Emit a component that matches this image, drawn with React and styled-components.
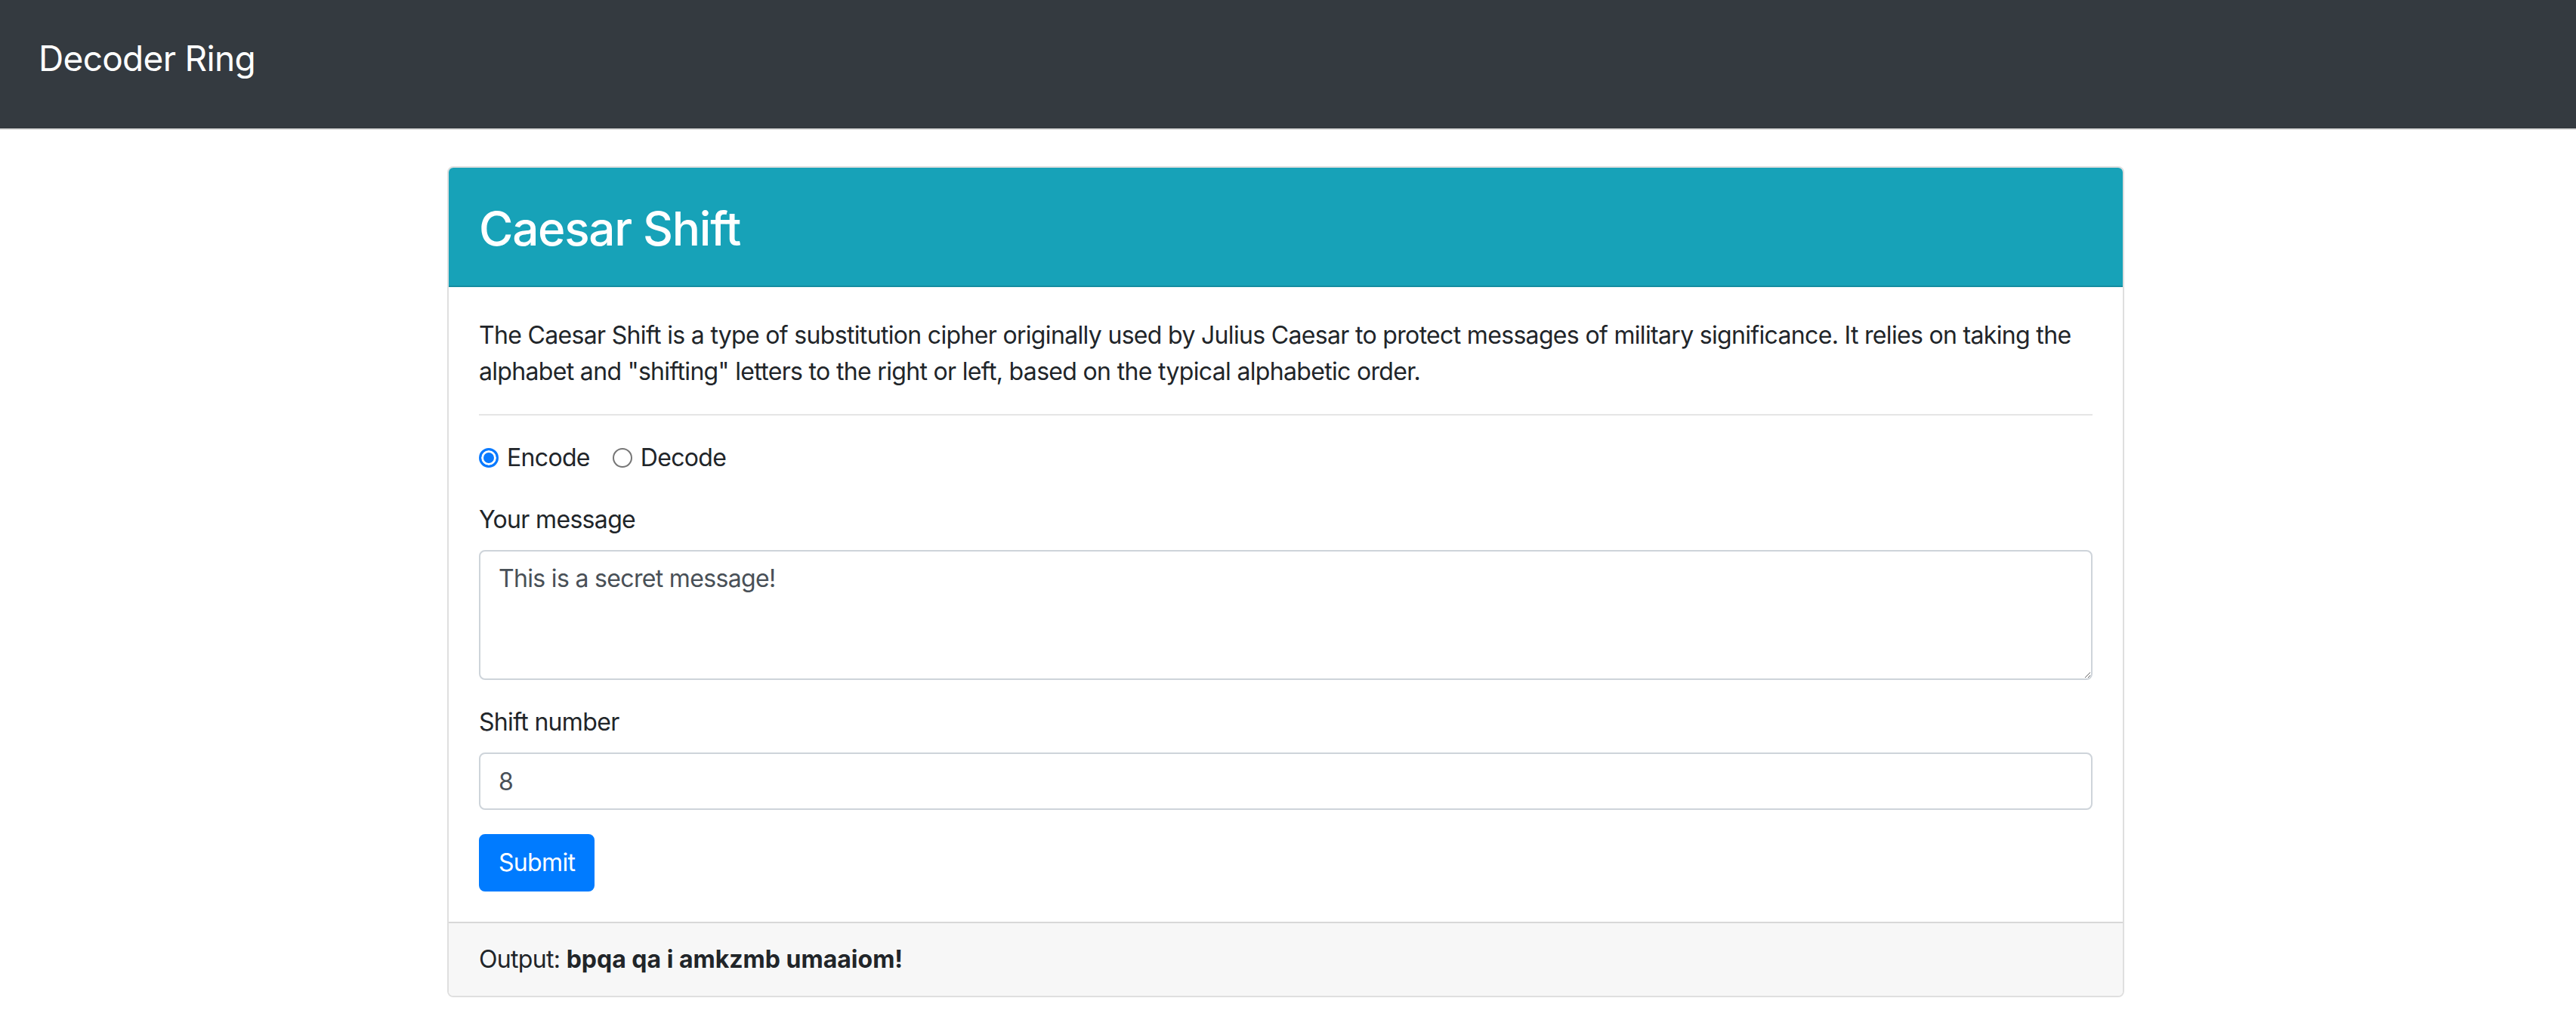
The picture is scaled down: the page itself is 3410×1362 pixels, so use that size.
import React from 'react';
import styled, { createGlobalStyle } from 'styled-components';

const GlobalStyle = createGlobalStyle`
  * {
    box-sizing: border-box;
  }

  body {
    margin: 0;
    background: #fff;
    color: #212529;
    font-family: Inter, "Noto Sans", "Liberation Sans", sans-serif;
    font-size: 32px;
    line-height: 48px;
    letter-spacing: -0.021em;
  }
`;

const Navbar = styled.nav`
  height: 172px;
  display: flex;
  align-items: center;
  padding: 0 51px 17px;
  background-color: #343a40;
  border-bottom: 2px solid #dcdcdc;
`;

const Brand = styled.a`
  color: #fff;
  font-size: 46px;
  line-height: 60px;
  letter-spacing: -0.015em;
  text-decoration: none;
`;

const Container = styled.main`
  width: 2226px;
  margin: 48px auto 0;
  padding-right: 6px;
`;

const Card = styled.section`
  border: 2px solid rgba(0, 0, 0, 0.125);
  border-radius: 8px;
  overflow: hidden;
`;

const CardHeader = styled.header`
  padding: 43px 40px 38px;
  background-color: #17a2b8;
  border-bottom: 2px solid rgba(0, 0, 0, 0.125);
`;

const Title = styled.h2`
  margin: 0;
  color: #fff;
  font-size: 62px;
  font-weight: 500;
  line-height: 75px;
  letter-spacing: -0.021em;
`;

const CardBody = styled.div`
  padding: 40px;
`;

const Description = styled.p`
  margin: 0 0 32px;
`;

const Divider = styled.hr`
  height: 0;
  margin: 0 0 32px;
  border: 0;
  border-top: 2px solid rgba(0, 0, 0, 0.1);
`;

const RadioRow = styled.div`
  display: flex;
  gap: 30px;
  margin-bottom: 34px;
`;

const RadioLabel = styled.label`
  display: flex;
  align-items: center;
  gap: 11px;
`;

const Radio = styled.input`
  appearance: none;
  width: 26px;
  height: 26px;
  margin: 0;
  border: 2px solid #767676;
  border-radius: 50%;
  background: #fff;

  &:checked {
    border: 3px solid #0a7aff;
    background: #0a7aff;
    box-shadow: inset 0 0 0 3px #fff;
  }
`;

const FormGroup = styled.div`
  margin-bottom: 32px;
`;

const FieldLabel = styled.label`
  display: block;
  margin-bottom: 16px;
`;

const fieldStyles = `
  display: block;
  width: 100%;
  padding: 12px 24px;
  border: 2px solid #ced4da;
  border-radius: 8px;
  background: #fff;
  color: #495057;
  font-family: inherit;
  font-size: 32px;
  line-height: 48px;
  letter-spacing: inherit;
`;

const TextArea = styled.textarea`
  ${fieldStyles}
  height: 172px;
  resize: vertical;
`;

const TextInput = styled.input`
  ${fieldStyles}
  height: 76px;
`;

const SubmitButton = styled.button`
  padding: 12px 24px;
  border: 2px solid #007bff;
  border-radius: 8px;
  background-color: #007bff;
  color: #fff;
  font-family: inherit;
  font-size: 32px;
  line-height: 48px;
  letter-spacing: inherit;
`;

const CardFooter = styled.footer`
  padding: 24px 40px;
  background-color: #f7f7f7;
  border-top: 2px solid rgba(0, 0, 0, 0.125);
`;

const Result = styled.strong`
  font-weight: 700;
  letter-spacing: 0;
`;

const App = () => {
  return (
    <>
      <GlobalStyle />
      <Navbar>
        <Brand href="#">Decoder Ring</Brand>
      </Navbar>
      <Container>
        <Card>
          <CardHeader>
            <Title>Caesar Shift</Title>
          </CardHeader>
          <CardBody>
            <Description>
              The Caesar Shift is a type of substitution cipher originally used by Julius Caesar to protect
              messages of military significance. It relies on taking the alphabet and "shifting" letters to
              the right or left, based on the typical alphabetic order.
            </Description>
            <Divider />
            <RadioRow>
              <RadioLabel>
                <Radio type="radio" name="mode" defaultChecked />
                Encode
              </RadioLabel>
              <RadioLabel>
                <Radio type="radio" name="mode" />
                Decode
              </RadioLabel>
            </RadioRow>
            <FormGroup>
              <FieldLabel htmlFor="message">Your message</FieldLabel>
              <TextArea id="message" defaultValue="This is a secret message!" />
            </FormGroup>
            <FormGroup>
              <FieldLabel htmlFor="shift">Shift number</FieldLabel>
              <TextInput id="shift" type="number" defaultValue={8} />
            </FormGroup>
            <SubmitButton type="submit">Submit</SubmitButton>
          </CardBody>
          <CardFooter>
            Output: <Result>bpqa qa i amkzmb umaaiom!</Result>
          </CardFooter>
        </Card>
      </Container>
    </>
  );
};

export default App;
